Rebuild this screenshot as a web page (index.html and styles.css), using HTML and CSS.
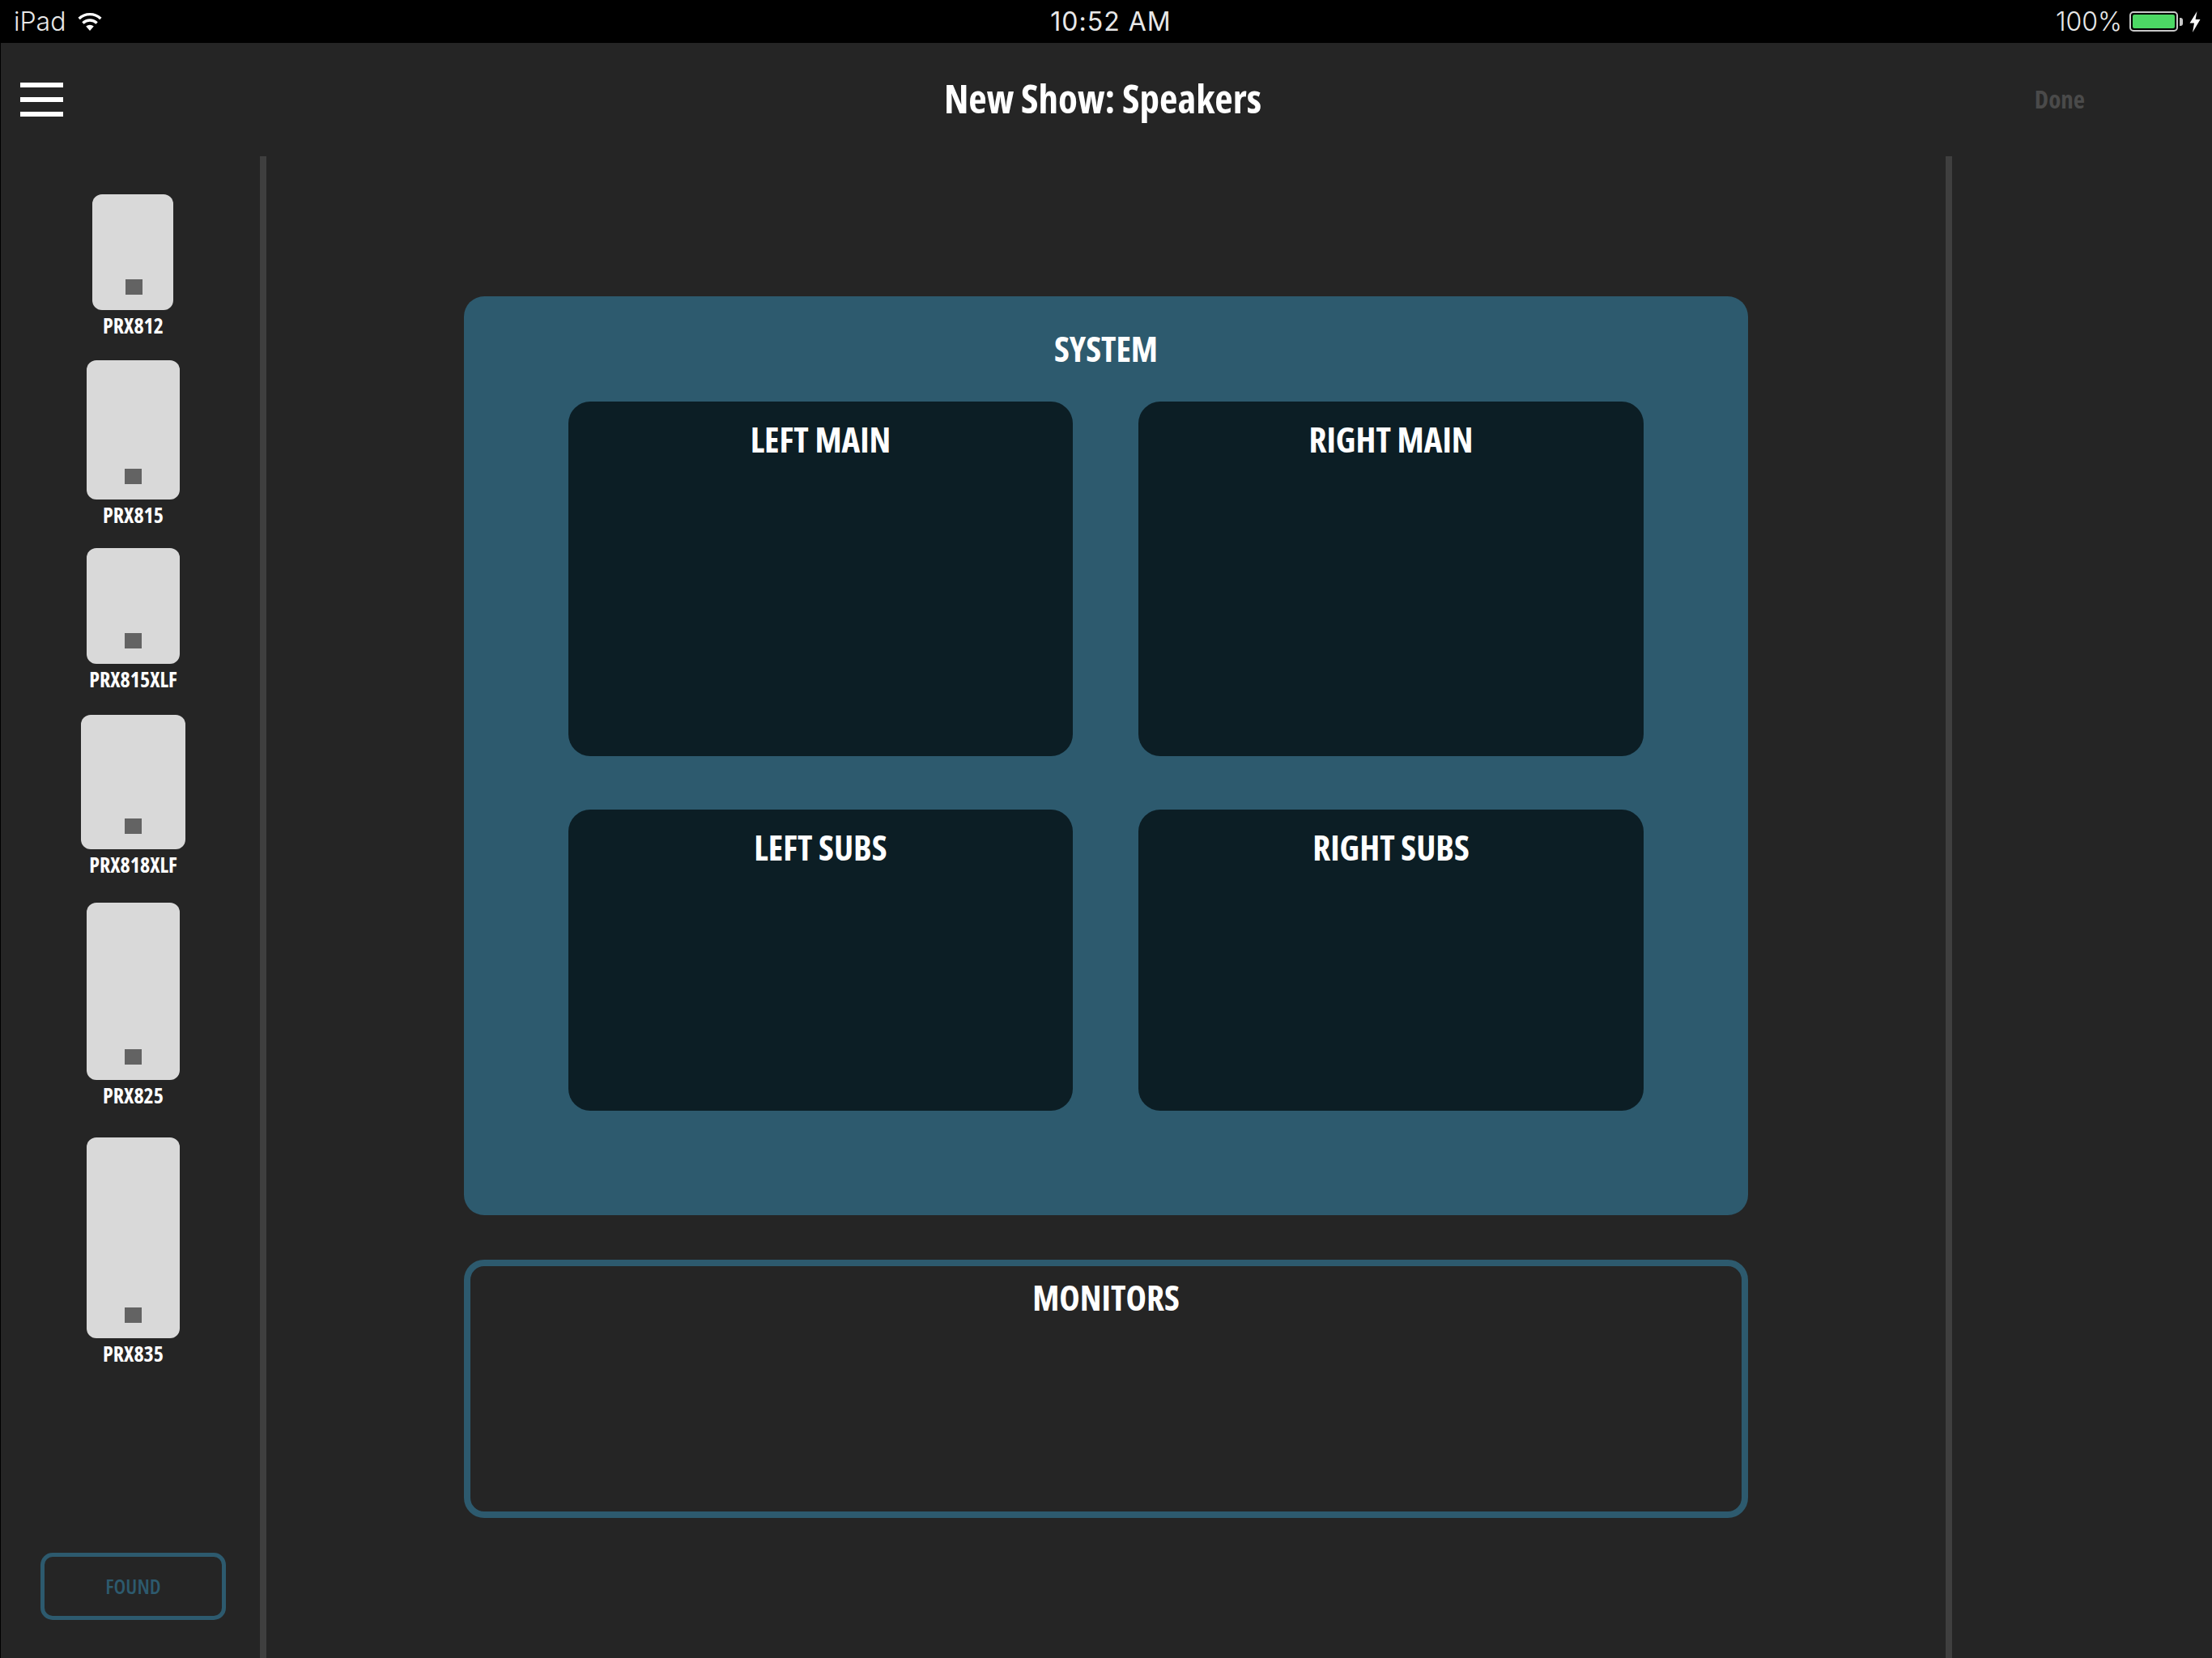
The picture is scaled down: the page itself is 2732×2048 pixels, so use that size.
FILE: index.html
```html
<!DOCTYPE html>
<html lang="en">
<head>
    <meta charset="UTF-8">
    <title>New Show: Speakers</title>
    <link rel="stylesheet" href="styles.css">
</head>
<body>
<div class="status-bar">
    <div class="status-bar__left">
        <span>iPad</span>
        <svg class="wifi" viewBox="0 0 32 24" width="32" height="24">
            <path d="M16 23 L11.2 17.6 A7 7 0 0 1 20.8 17.6 Z" fill="#fff"/>
            <path d="M7.4 13.4 A12.5 12.5 0 0 1 24.6 13.4" fill="none" stroke="#fff" stroke-width="3.4"/>
            <path d="M2.6 8 A19.5 19.5 0 0 1 29.4 8" fill="none" stroke="#fff" stroke-width="3.4"/>
        </svg>
    </div>
    <div class="status-bar__time">10:52 AM</div>
    <div class="status-bar__right">
        <span>100%</span>
        <span class="battery"><span class="battery__level"></span></span>
        <span class="battery__tip"></span>
        <svg class="bolt" viewBox="0 0 14 26" width="14" height="26">
            <path d="M9.5 0 L0.5 14.5 L6 14.5 L4 26 L13.5 10 L7.6 10 Z" fill="#fff"/>
        </svg>
    </div>
</div>

<div class="app">
    <div class="nav-bar">
        <div class="menu-btn">
            <span></span>
            <span></span>
            <span></span>
        </div>
        <h1 class="nav-bar__title">New Show: Speakers</h1>
        <div class="nav-bar__done">Done</div>
    </div>

    <div class="workspace">
        <aside class="sidebar">
            <div class="speaker-list">
                <div class="speaker speaker--812">
                    <div class="speaker__box"><span class="speaker__dot"></span></div>
                    <div class="speaker__name">PRX812</div>
                </div>
                <div class="speaker speaker--815">
                    <div class="speaker__box"><span class="speaker__dot"></span></div>
                    <div class="speaker__name">PRX815</div>
                </div>
                <div class="speaker speaker--815xlf">
                    <div class="speaker__box"><span class="speaker__dot"></span></div>
                    <div class="speaker__name">PRX815XLF</div>
                </div>
                <div class="speaker speaker--818xlf">
                    <div class="speaker__box"><span class="speaker__dot"></span></div>
                    <div class="speaker__name">PRX818XLF</div>
                </div>
                <div class="speaker speaker--825">
                    <div class="speaker__box"><span class="speaker__dot"></span></div>
                    <div class="speaker__name">PRX825</div>
                </div>
                <div class="speaker speaker--835">
                    <div class="speaker__box"><span class="speaker__dot"></span></div>
                    <div class="speaker__name">PRX835</div>
                </div>
            </div>
            <div class="found-btn">FOUND</div>
        </aside>

        <main class="stage">
            <section class="system">
                <h2 class="system__title">SYSTEM</h2>
                <div class="system__grid">
                    <div class="zone zone--main">LEFT MAIN</div>
                    <div class="zone zone--main">RIGHT MAIN</div>
                    <div class="zone zone--subs">LEFT SUBS</div>
                    <div class="zone zone--subs">RIGHT SUBS</div>
                </div>
            </section>
            <section class="monitors">MONITORS</section>
        </main>

        <aside class="right-panel"></aside>
    </div>
</div>
</body>
</html>
```

FILE: styles.css
```css
* {
    margin: 0;
    box-sizing: border-box;
}

body {
    width: 2732px;
    height: 2048px;
    overflow: hidden;
    background: #252525;
    color: #fff;
    font-family: "Open Sans", sans-serif;
    font-stretch: 75%;
    font-weight: 700;
}

/*status bar*/

.status-bar {
    height: 53px;
    padding: 0 14px 0 17px;
    display: grid;
    grid-template-columns: 1fr auto 1fr;
    align-items: center;
    background: #000;
    color: #e8e8e8;
    font-family: Inter, sans-serif;
    font-stretch: 100%;
    font-size: 32px;
    font-weight: 300;
}

.status-bar__left {
    display: flex;
    align-items: center;
    gap: 14px;
}

.status-bar__time {
    padding-left: 9px;
    font-weight: 400;
    letter-spacing: 1px;
}

.status-bar__right {
    display: flex;
    align-items: center;
    justify-content: flex-end;
}

.battery {
    width: 60px;
    height: 25px;
    margin-left: 9px;
    padding: 2px;
    border: 2px solid #c8c8c8;
    border-radius: 5px;
}

.battery__level {
    display: block;
    height: 100%;
    background: #4cd964;
    border-radius: 2px;
}

.battery__tip {
    width: 4px;
    height: 10px;
    margin-left: 2px;
    background: #c8c8c8;
    border-radius: 0 3px 3px 0;
}

.bolt {
    margin-left: 8px;
}

/*nav*/

.app {
    height: 1995px;
    display: flex;
    flex-direction: column;
    border-left: 1px solid #000;
}

.nav-bar {
    height: 140px;
    flex-shrink: 0;
    display: grid;
    grid-template-columns: 1fr auto 1fr;
    align-items: center;
    padding: 0 157px 0 24px;
}

.menu-btn {
    width: 53px;
    display: flex;
    flex-direction: column;
    gap: 12px;
}

.menu-btn span {
    height: 6px;
    background: #fff;
}

.nav-bar__title {
    padding: 0 0 4px 124px;
    font-size: 49px;
    font-weight: 700;
}

.nav-bar__done {
    justify-self: end;
    padding-bottom: 2px;
    font-size: 31px;
    color: #4a4a4a;
}

/*main area*/

.workspace {
    flex: 1;
    display: flex;
    min-height: 0;
}

.sidebar {
    width: 328px;
    flex-shrink: 0;
    padding: 47px 0 47px 7px;
    display: flex;
    flex-direction: column;
    align-items: center;
    justify-content: space-between;
    border-right: 8px solid #3f3f3f;
}

.speaker-list {
    display: flex;
    flex-direction: column;
    align-items: center;
}

.speaker {
    display: flex;
    flex-direction: column;
    align-items: center;
}

.speaker__box {
    position: relative;
    width: 115px;
    background: #d9d9d9;
    border-radius: 12px;
}

.speaker__dot {
    position: absolute;
    left: 50%;
    bottom: 19px;
    width: 21px;
    height: 19px;
    margin-left: -10.5px;
    background: #636363;
}

.speaker__name {
    margin-top: 4px;
    font-size: 26px;
    line-height: 31px;
    white-space: nowrap;
}

.speaker--812 { margin-bottom: 27px; }
.speaker--812 .speaker__box { width: 100px; height: 143px; margin-right: 2px; }
.speaker--812 .speaker__dot { margin-left: -9px; }

.speaker--815 { margin-bottom: 25px; }
.speaker--815 .speaker__box { height: 172px; }

.speaker--815xlf { margin-bottom: 28px; }
.speaker--815xlf .speaker__box { height: 143px; }

.speaker--818xlf { margin-bottom: 31px; }
.speaker--818xlf .speaker__box { width: 129px; height: 166px; }

.speaker--825 { margin-bottom: 36px; }
.speaker--825 .speaker__box { height: 219px; }

.speaker--835 .speaker__box { height: 248px; }

.found-btn {
    width: 229px;
    height: 83px;
    padding-bottom: 2px;
    display: flex;
    align-items: center;
    justify-content: center;
    border: 5px solid #2d5a6e;
    border-radius: 15px;
    color: #2d5a6e;
    font-size: 26px;
    font-weight: 600;
}

.stage {
    width: 2082px;
    flex-shrink: 0;
    padding: 173px 244px 0;
    display: flex;
    flex-direction: column;
    gap: 55px;
    border-right: 8px solid #3f3f3f;
}

.system {
    height: 1135px;
    padding: 32px 129px 0;
    background: #2d5a6e;
    border-radius: 25px;
}

.system__title {
    height: 98px;
    font-size: 43px;
    line-height: 66px;
    font-weight: 700;
    text-align: center;
}

.system__grid {
    display: grid;
    grid-template-columns: 623px 624px;
    grid-template-rows: 438px 372px;
    justify-content: space-between;
    row-gap: 66px;
}

.zone {
    padding-top: 17px;
    background: #0c1e25;
    border-radius: 27px;
    font-size: 43px;
    line-height: 60px;
    text-align: center;
}

.monitors {
    height: 319px;
    padding-top: 9px;
    border: 8px solid #2d5a6e;
    border-radius: 25px;
    font-size: 43px;
    line-height: 60px;
    text-align: center;
}

.right-panel {
    flex: 1;
}
```
